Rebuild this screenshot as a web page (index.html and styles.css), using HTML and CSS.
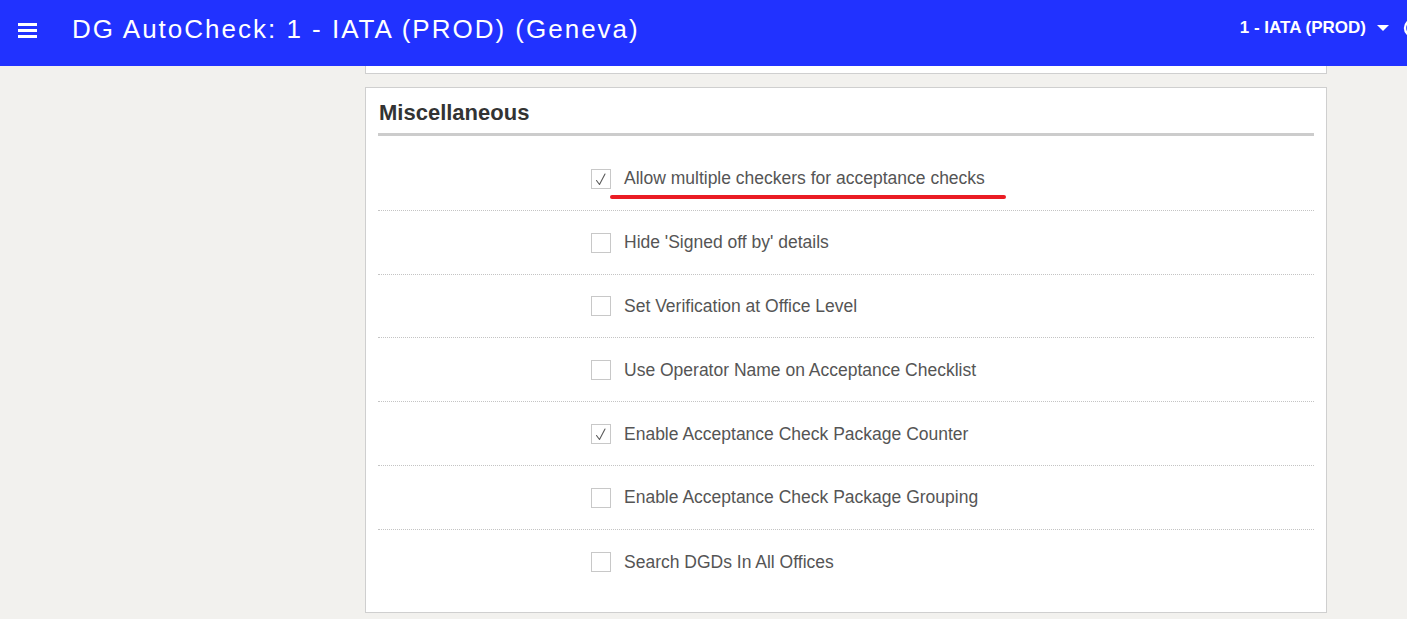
FILE: index.html
```html
<!DOCTYPE html>
<html>
<head>
<meta charset="utf-8">
<link rel="stylesheet" href="styles.css">
</head>
<body>
<header class="topbar">
  <div class="menu-btn">
    <svg width="20" height="16" viewBox="0 0 20 16"><rect x="0" y="1" width="19" height="3" fill="#fff"/><rect x="0" y="7" width="19" height="3" fill="#fff"/><rect x="0" y="13" width="19" height="3" fill="#fff"/></svg>
  </div>
  <div class="title">DG AutoCheck: 1 - IATA (PROD) (Geneva)</div>
  <div class="spacer"></div>
  <div class="org">1 - IATA (PROD)</div>
  <svg class="caret" width="12" height="6" viewBox="0 0 12 6"><path d="M0 0 L12 0 L6 6 Z" fill="#fff"/></svg>
  <svg class="user-icon" width="20" height="20" viewBox="0 0 20 20"><circle cx="10" cy="10" r="8" fill="none" stroke="#fff" stroke-width="2.4"/></svg>
</header>
<main class="content">
  <div class="column">
    <div class="card prev-card"></div>
    <section class="card misc">
      <h2 class="misc-title">Miscellaneous</h2>
      <div class="rows">
        <div class="row">
          <span class="cb"><svg class="tick" width="18" height="18" viewBox="0 0 18 18"><path d="M4.5 10.5 L7.5 14.5 L13 4" fill="none" stroke="#5a5a5a" stroke-width="1.1" stroke-linecap="round" stroke-linejoin="round"/></svg></span>
          <span class="label underlined">Allow multiple checkers for acceptance checks</span>
        </div>
        <div class="row">
          <span class="cb"></span>
          <span class="label">Hide 'Signed off by' details</span>
        </div>
        <div class="row">
          <span class="cb"></span>
          <span class="label">Set Verification at Office Level</span>
        </div>
        <div class="row">
          <span class="cb"></span>
          <span class="label">Use Operator Name on Acceptance Checklist</span>
        </div>
        <div class="row">
          <span class="cb"><svg class="tick" width="18" height="18" viewBox="0 0 18 18"><path d="M4.5 10.5 L7.5 14.5 L13 4" fill="none" stroke="#5a5a5a" stroke-width="1.1" stroke-linecap="round" stroke-linejoin="round"/></svg></span>
          <span class="label">Enable Acceptance Check Package Counter</span>
        </div>
        <div class="row">
          <span class="cb"></span>
          <span class="label">Enable Acceptance Check Package Grouping</span>
        </div>
        <div class="row last">
          <span class="cb"></span>
          <span class="label">Search DGDs In All Offices</span>
        </div>
      </div>
    </section>
  </div>
</main>
</body>
</html>
```

FILE: styles.css
```css
* { box-sizing: border-box; }
html, body {
  margin: 0;
  padding: 0;
  background: #f2f1ee;
  font-family: "Liberation Sans", Arial, sans-serif;
  overflow: hidden;
  height: 619px;
}
.topbar {
  height: 66px;
  background: #2132ff;
  display: flex;
  align-items: center;
  color: #fff;
  padding-left: 18px;
  overflow: hidden;
}
.menu-btn {
  width: 20px;
  height: 16px;
  display: flex;
  margin-top: -6px;
}
.title {
  margin-left: 34px;
  font-size: 26px;
  letter-spacing: 2px;
  margin-top: -8px;
  white-space: nowrap;
}
.spacer { flex: 1; }
.org {
  font-weight: bold;
  font-size: 17px;
  margin-top: -10px;
  white-space: nowrap;
}
.caret {
  margin-left: 11px;
  margin-top: -10px;
}
.user-icon {
  flex: none;
  margin-left: 14px;
  margin-right: -16px;
  margin-top: -10px;
}
.content {
  display: flex;
  padding-left: 365px;
}
.column {
  width: 962px;
  display: flex;
  flex-direction: column;
}
.card {
  background: #fff;
  border: 1px solid #cfcfcf;
}
.prev-card {
  height: 8px;
  border-top: none;
  margin-bottom: 13px;
}
.misc {
  padding: 12px 12px 18px 12px;
}
.misc-title {
  margin: 0;
  font-size: 22px;
  font-weight: bold;
  color: #333;
  padding-left: 1px;
  height: 36px;
  line-height: 26px;
  border-bottom: 3px solid #cccccc;
  padding-top: 0;
}
.rows {
  margin-top: 11px;
}
.row {
  height: 63.8px;
  display: flex;
  align-items: center;
  padding-left: 213px;
  padding-top: 1px;
  border-bottom: 1px dotted #c4c4c4;
}
.row.last { border-bottom: none; }
.cb {
  width: 20px;
  height: 20px;
  border: 1px solid #c8c8c8;
  background: #fff;
  display: flex;
  align-items: center;
  justify-content: center;
}
.tick { display: block; }
.label {
  margin-left: 13px;
  font-size: 17.5px;
  color: #555;
  position: relative;
}
.underlined::after {
  content: "";
  position: absolute;
  left: -14px;
  right: -21px;
  bottom: -10px;
  height: 4px;
  border-radius: 2px;
  background: #ea1c24;
}
```
